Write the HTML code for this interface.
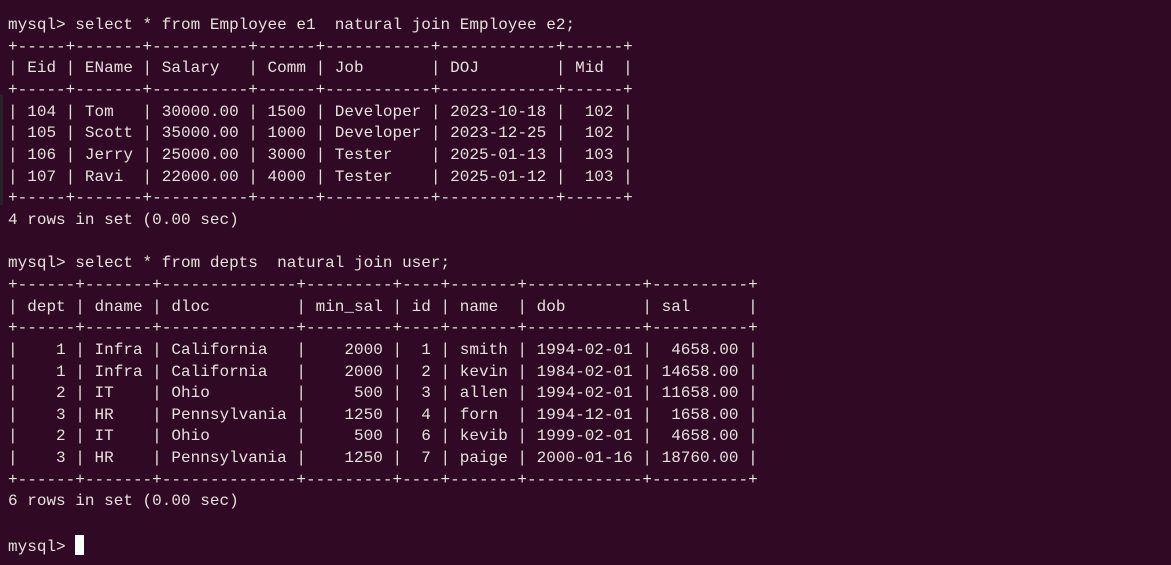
<!DOCTYPE html>
<html><head><meta charset="utf-8"><style>
html,body{margin:0;padding:0;background:#300a24;width:1171px;height:565px;overflow:hidden}
pre{margin:0;position:absolute;left:8px;top:15px;font-family:"Liberation Mono",monospace;font-size:16px;line-height:21.65px;color:#e6e1dc;letter-spacing:0.01px}
.cur{display:inline-block;width:9px;height:20px;background:#fff;vertical-align:-4px}
.strip{position:absolute;left:0;top:95px;width:3px;height:110px;background:#2a2228}
</style></head><body>
<div class="strip"></div>
<pre>mysql&gt; select * from Employee e1  natural join Employee e2;
+-----+-------+----------+------+-----------+------------+------+
| Eid | EName | Salary   | Comm | Job       | DOJ        | Mid  |
+-----+-------+----------+------+-----------+------------+------+
| 104 | Tom   | 30000.00 | 1500 | Developer | 2023-10-18 |  102 |
| 105 | Scott | 35000.00 | 1000 | Developer | 2023-12-25 |  102 |
| 106 | Jerry | 25000.00 | 3000 | Tester    | 2025-01-13 |  103 |
| 107 | Ravi  | 22000.00 | 4000 | Tester    | 2025-01-12 |  103 |
+-----+-------+----------+------+-----------+------------+------+
4 rows in set (0.00 sec)

mysql&gt; select * from depts  natural join user;
+------+-------+--------------+---------+----+-------+------------+----------+
| dept | dname | dloc         | min_sal | id | name  | dob        | sal      |
+------+-------+--------------+---------+----+-------+------------+----------+
|    1 | Infra | California   |    2000 |  1 | smith | 1994-02-01 |  4658.00 |
|    1 | Infra | California   |    2000 |  2 | kevin | 1984-02-01 | 14658.00 |
|    2 | IT    | Ohio         |     500 |  3 | allen | 1994-02-01 | 11658.00 |
|    3 | HR    | Pennsylvania |    1250 |  4 | forn  | 1994-12-01 |  1658.00 |
|    2 | IT    | Ohio         |     500 |  6 | kevib | 1999-02-01 |  4658.00 |
|    3 | HR    | Pennsylvania |    1250 |  7 | paige | 2000-01-16 | 18760.00 |
+------+-------+--------------+---------+----+-------+------------+----------+
6 rows in set (0.00 sec)

mysql&gt; <span class="cur"></span></pre>
</body></html>
